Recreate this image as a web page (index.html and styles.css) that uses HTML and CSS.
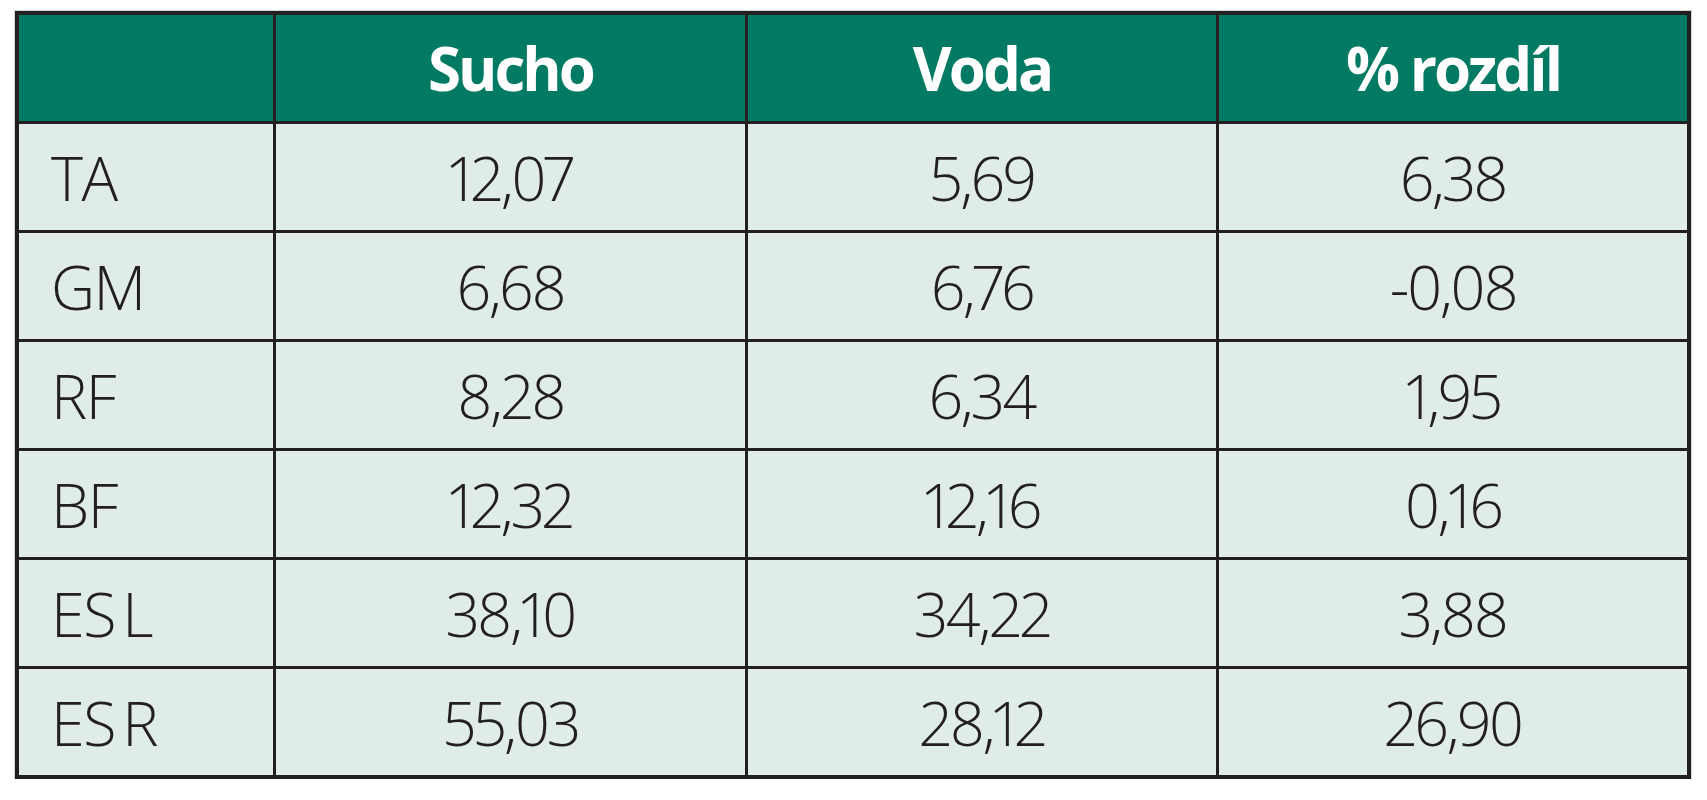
FILE: index.html
```html
<!DOCTYPE html>
<html lang="cs">
<head>
<meta charset="utf-8">
<title>Tabulka</title>
<link rel="stylesheet" href="styles.css">
</head>
<body>
<div class="page">
  <div class="grid" role="table">
    <div class="cell head" role="columnheader"></div>
    <div class="cell head" role="columnheader">Sucho</div>
    <div class="cell head" role="columnheader">Voda</div>
    <div class="cell head" role="columnheader">% rozdíl</div>

    <div class="cell label">TA</div>
    <div class="cell num">12,07</div>
    <div class="cell num">5,69</div>
    <div class="cell num">6,38</div>

    <div class="cell label">GM</div>
    <div class="cell num">6,68</div>
    <div class="cell num">6,76</div>
    <div class="cell num">-0,08</div>

    <div class="cell label">RF</div>
    <div class="cell num">8,28</div>
    <div class="cell num">6,34</div>
    <div class="cell num">1,95</div>

    <div class="cell label">BF</div>
    <div class="cell num">12,32</div>
    <div class="cell num">12,16</div>
    <div class="cell num">0,16</div>

    <div class="cell label">ES L</div>
    <div class="cell num">38,10</div>
    <div class="cell num">34,22</div>
    <div class="cell num">3,88</div>

    <div class="cell label">ES R</div>
    <div class="cell num">55,03</div>
    <div class="cell num">28,12</div>
    <div class="cell num">26,90</div>
  </div>
</div>
</body>
</html>
```
FILE: styles.css
```css
html, body {
  margin: 0;
  padding: 0;
  background: #ffffff;
}

.page {
  padding: 11px 0 0 15px;
}

.grid {
  display: grid;
  grid-template-columns: 254px 469px 468px 468px;
  grid-auto-rows: 106px;
  gap: 3px;
  padding: 4px;
  width: max-content;
  background: #231f20;
  box-shadow: 0 0 0 1px #d4d4d4;
}

.cell {
  display: flex;
  align-items: center;
  justify-content: center;
  background: #dfece7;
  color: #231f20;
  font-family: "Open Sans", "Liberation Sans", sans-serif;
  font-weight: 300;
  font-size: 61px;
  font-variant-numeric: proportional-nums;
  letter-spacing: -2.5px;
  line-height: 1;
  white-space: nowrap;
}

.head {
  background: #007a62;
  color: #ffffff;
  font-weight: 700;
  font-size: 60px;
  letter-spacing: -3px;
}

.label {
  justify-content: flex-start;
  padding-left: 32px;
  letter-spacing: -1.5px;
  word-spacing: -7px;
}
```
